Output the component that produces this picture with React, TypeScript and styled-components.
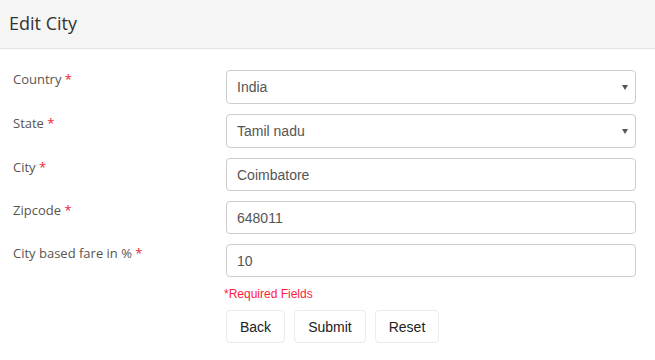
import React from 'react';
import styled, { createGlobalStyle } from 'styled-components';

const GlobalStyle = createGlobalStyle`
  body {
    margin: 0;
    background: #fff;
    font-family: "Open Sans", "Liberation Sans", Arial, sans-serif;
  }
`;

const Page = styled.div`
  width: 655px;
  min-height: 360px;
  background: #fff;
`;

const Header = styled.div`
  height: 49px;
  background: #f5f5f5;
  border-bottom: 1px solid #e3e3e3;
  display: flex;
  align-items: center;
  padding-left: 9px;
  box-sizing: border-box;
`;

const Title = styled.h2`
  margin: 0;
  font-family: "Open Sans", sans-serif;
  font-weight: 400;
  font-size: 18px;
  color: #333;
  padding-bottom: 2px;
`;

const Form = styled.form`
  padding: 21px 19px 0 13px;
`;

const Row = styled.div`
  display: grid;
  grid-template-columns: 213px 410px;
  align-items: start;
  margin-bottom: 10px;
`;

const Label = styled.label`
  font-family: "Open Sans", sans-serif;
  font-size: 13px;
  line-height: 18px;
  color: #595552;
`;

const Star = styled.span`
  color: #ee2233;
`;

const fieldCss = `
  width: 100%;
  box-sizing: border-box;
  border: 1px solid #cccccc;
  border-radius: 4px;
  background: #fff;
  font-family: "Liberation Sans", Arial, sans-serif;
  font-size: 14px;
  color: #555;
  padding: 0 10px;
  outline: none;
  margin: 0;
`;

const Input = styled.input`
  ${fieldCss}
  height: 33px;
`;

const SelectWrap = styled.div`
  position: relative;
  &::after {
    content: '';
    position: absolute;
    right: 8px;
    top: 15px;
    border-left: 3px solid transparent;
    border-right: 3px solid transparent;
    border-top: 5px solid #555;
  }
`;

const Select = styled.select`
  ${fieldCss}
  height: 34px;
  appearance: none;
  -webkit-appearance: none;
`;

const Footer = styled.div`
  padding-left: 211px;
`;

const Required = styled.div`
  font-family: "Liberation Sans", Arial, sans-serif;
  font-size: 12px;
  color: #ff1a3c;
  line-height: 14px;
`;

const Buttons = styled.div`
  display: flex;
  gap: 9px;
  margin-top: 9px;
  padding-left: 2px;
`;

const Button = styled.button`
  height: 33px;
  padding: 0 13px;
  background: #fff;
  border: 1px solid #ebebeb;
  border-radius: 4px;
  font-family: "Liberation Sans", Arial, sans-serif;
  font-size: 14px;
  color: #222;
  cursor: pointer;
`;

type Field = { label: string; value: string; select?: boolean; options?: string[] };

const fields: Field[] = [
  { label: 'Country', value: 'India', select: true, options: ['India'] },
  { label: 'State', value: 'Tamil nadu', select: true, options: ['Tamil nadu'] },
  { label: 'City', value: 'Coimbatore' },
  { label: 'Zipcode', value: '648011' },
  { label: 'City based fare in %', value: '10' },
];

export default function App() {
  return (
    <Page>
      <GlobalStyle />
      <Header>
        <Title>Edit City</Title>
      </Header>
      <Form onSubmit={(e) => e.preventDefault()}>
        {fields.map((f) => (
          <Row key={f.label}>
            <Label>
              {f.label} <Star>*</Star>
            </Label>
            {f.select ? (
              <SelectWrap>
                <Select defaultValue={f.value}>
                  {f.options!.map((o) => (
                    <option key={o}>{o}</option>
                  ))}
                </Select>
              </SelectWrap>
            ) : (
              <Input defaultValue={f.value} />
            )}
          </Row>
        ))}
        <Footer>
          <Required>*Required Fields</Required>
          <Buttons>
            <Button type="button">Back</Button>
            <Button type="submit">Submit</Button>
            <Button type="reset">Reset</Button>
          </Buttons>
        </Footer>
      </Form>
    </Page>
  );
}
